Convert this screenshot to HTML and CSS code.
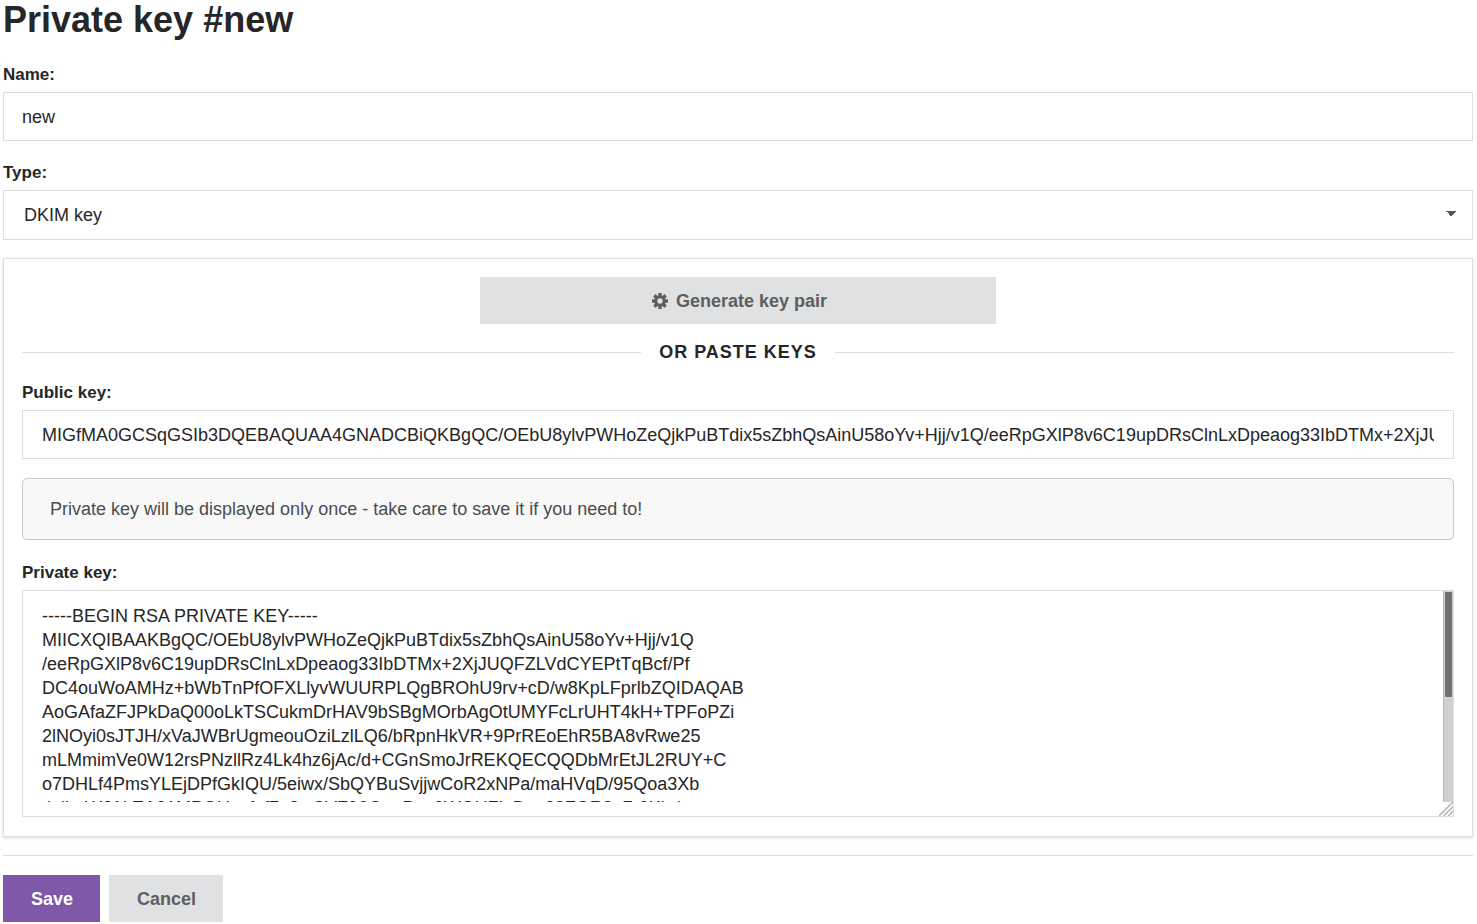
FILE: index.html
```
<!DOCTYPE html>
<html lang="en">
<head>
  <meta charset="UTF-8" />
  <meta name="viewport" content="width=device-width, initial-scale=1" />
  <title>Private key #new</title>
  <link rel="stylesheet" href="styles.css">
</head>
<body>

<h1>Private key #new</h1>

<form class="form">
  <div class="field">
    <label for="name">Name:</label>
    <input class="control name" type="text" id="name" value="new">
  </div>

  <div class="field">
    <label for="type">Type:</label>
    <select class="control type" id="type">
      <option selected>DKIM key</option>
    </select>
  </div>

  <section class="segment">
    <button class="button generate" type="button">
      <svg class="icon" viewBox="0 0 16 16" aria-hidden="true">
        <g fill="currentColor">
          <rect x="6.3" y="0" width="3.4" height="16" rx="0.6"/>
          <rect x="6.3" y="0" width="3.4" height="16" rx="0.6" transform="rotate(45 8 8)"/>
          <rect x="6.3" y="0" width="3.4" height="16" rx="0.6" transform="rotate(90 8 8)"/>
          <rect x="6.3" y="0" width="3.4" height="16" rx="0.6" transform="rotate(135 8 8)"/>
          <circle cx="8" cy="8" r="5.8"/>
        </g>
        <circle cx="8" cy="8" r="2.7" fill="#e0e1e2"/>
      </svg>
      Generate key pair
    </button>

    <div class="divider">Or paste keys</div>

    <div class="field">
      <label for="publicKey">Public key:</label>
      <input class="control" type="text" id="publicKey" value="MIGfMA0GCSqGSIb3DQEBAQUAA4GNADCBiQKBgQC/OEbU8ylvPWHoZeQjkPuBTdix5sZbhQsAinU58oYv+Hjj/v1Q/eeRpGXlP8v6C19upDRsClnLxDpeaog33IbDTMx+2XjJUQFZLVdCYEPtTqBcf/Pf">
    </div>

    <div class="message">Private key will be displayed only once - take care to save it if you need to!</div>

    <div class="field">
      <label for="privateKey">Private key:</label>
      <div class="key-box">
        <div class="key-scroll">
          <textarea id="privateKey" spellcheck="false">-----BEGIN RSA PRIVATE KEY-----
MIICXQIBAAKBgQC/OEbU8ylvPWHoZeQjkPuBTdix5sZbhQsAinU58oYv+Hjj/v1Q
/eeRpGXlP8v6C19upDRsClnLxDpeaog33IbDTMx+2XjJUQFZLVdCYEPtTqBcf/Pf
DC4ouWoAMHz+bWbTnPfOFXLlyvWUURPLQgBROhU9rv+cD/w8KpLFprlbZQIDAQAB
AoGAfaZFJPkDaQ00oLkTSCukmDrHAV9bSBgMOrbAgOtUMYFcLrUHT4kH+TPFoPZi
2lNOyi0sJTJH/xVaJWBrUgmeouOziLzlLQ6/bRpnHkVR+9PrREoEhR5BA8vRwe25
mLMmimVe0W12rsPNzllRz4Lk4hz6jAc/d+CGnSmoJrREKQECQQDbMrEtJL2RUY+C
o7DHLf4PmsYLEjDPfGkIQU/5eiwx/SbQYBuSvjjwCoR2xNPa/maHVqD/95Qoa3Xb
tlnihnWJAkEA31MPQHosfqf7u8wCVF93QngP+v3WQHZinDzn33FQR8q7r3Kbdeyp
</textarea>
          <div class="track" aria-hidden="true"><div class="thumb"></div></div>
        </div>
        <svg class="grip" viewBox="0 0 15 15" aria-hidden="true">
          <path d="M0 15L15 0M5 15L15 5M10 15L15 10"/>
        </svg>
      </div>
    </div>
  </section>

  <hr>

  <div class="actions">
    <button class="button primary" type="submit">Save</button>
    <button class="button" type="button">Cancel</button>
  </div>
</form>

</body>
</html>
```
FILE: styles.css
```
* {
  box-sizing: border-box;
}
body {
  margin: 0;
  padding: 0 4px 0 3px;
  background: #fff;
  color: #262626;
  font-family: "Liberation Sans", Arial, sans-serif;
  font-size: 18px;
  line-height: 24px;
}
h1 {
  margin: 0 0 21px;
  font-size: 36px;
  line-height: 40px;
}
.field {
  margin-bottom: 18px;
}
.field label {
  display: block;
  margin-bottom: 5px;
  padding-top: 2px;
  font-size: 17px;
  line-height: 24px;
  font-weight: bold;
}
.control {
  display: block;
  width: 100%;
  height: 49px;
  margin: 0;
  padding: 2px 19px 0;
  border: 1px solid #dededf;
  border-radius: 0;
  background: #fff;
  color: #262626;
  font: inherit;
}
.name {
  padding: 2px 18px 0;
}
.control.type {
  height: 50px;
  padding: 0 20px;
  appearance: none;
  background: linear-gradient(to bottom right, #555 50%, transparent 50%) right 16px top 20px / 5px 5px no-repeat,
    linear-gradient(to bottom left, #555 50%, transparent 50%) right 21px top 20px / 5px 5px no-repeat, #fff;
}
.segment {
  padding: 18px 18px 19px;
  border: 1px solid #dededf;
  box-shadow: 0 1px 3px rgba(34, 36, 38, 0.15);
}
.segment .field:last-child {
  margin-bottom: 0;
}
.button {
  height: 47px;
  padding: 0 27px 0 28px;
  border: 0;
  background: #e0e1e2;
  color: #5e5e5f;
  font: inherit;
  font-weight: bold;
  cursor: pointer;
}
.button.primary {
  background: #7f58a8;
  color: #fff;
}
.button.generate {
  display: flex;
  align-items: center;
  justify-content: center;
  gap: 8px;
  width: 36%;
  margin: 0 auto;
  padding: 0 24px 0 27px;
}
.icon {
  width: 16px;
  height: 16px;
}
.divider {
  display: flex;
  align-items: center;
  gap: 18px;
  margin: 16px 0 15px;
  font-weight: bold;
  letter-spacing: 1px;
  text-transform: uppercase;
}
.divider::before,
.divider::after {
  content: "";
  flex: 1;
  height: 1px;
  background: #dededf;
}
.message {
  margin: 19px 0;
  padding: 18px 27px;
  border: 1px solid #c5c6c7;
  border-radius: 5px;
  background: #f8f8f9;
  color: #4b4c4d;
}
.key-box {
  display: flex;
  flex-direction: column;
  border: 1px solid #dededf;
}
.key-scroll {
  display: flex;
  height: 211px;
}
.key-scroll textarea {
  flex: 1;
  padding: 13px 19px;
  border: 0;
  outline: 0;
  resize: none;
  background: #fff;
  color: #262626;
  font: inherit;
  scrollbar-width: none;
}
.track {
  width: 10px;
  padding: 1px;
  border-left: 1px solid #b8b8b8;
  background: #d0d0d0;
}
.thumb {
  height: 50%;
  border-radius: 1px;
  background: #6f6f6f;
}
.grip {
  align-self: flex-end;
  width: 14px;
  height: 14px;
  fill: none;
  stroke: #adadad;
  stroke-width: 1.5;
}
hr {
  height: 1px;
  margin: 18px 0 19px;
  border: 0;
  background: #dededf;
}
.actions {
  display: flex;
  gap: 9px;
}
```
